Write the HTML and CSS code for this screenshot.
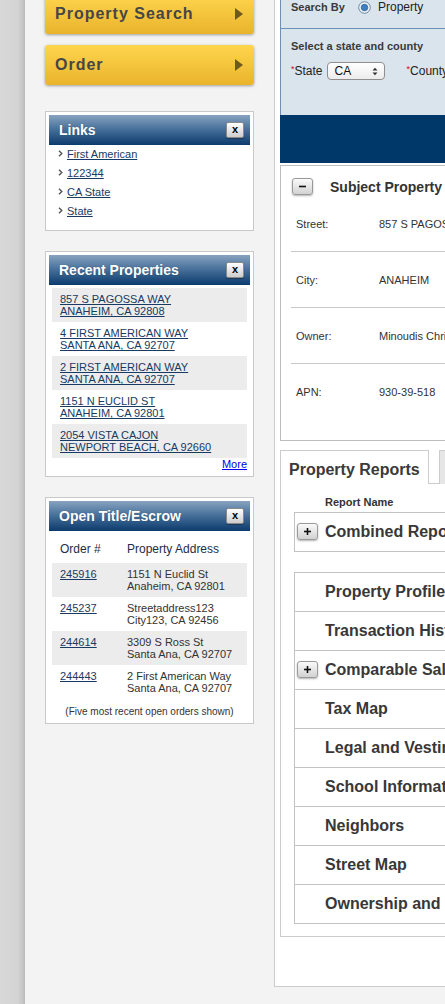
FILE: index.html
```html
<!DOCTYPE html>
<html>
<head>
<meta charset="utf-8">
<link rel="stylesheet" href="styles.css">
</head>
<body>
<div class="layout">
  <div class="strip"></div>
  <aside class="sidebar">
    <div class="nav-btn">Property Search<span class="tri"></span></div>
    <div class="nav-btn">Order<span class="tri"></span></div>

    <section class="panel first">
      <div class="panel-head"><span>Links</span><span class="close">x</span></div>
      <ul class="links">
        <li><svg class="chev" width="5" height="7" viewBox="0 0 5 7"><path d="M1 0.8 L3.8 3.5 L1 6.2" fill="none" stroke="#555" stroke-width="1.4"/></svg><a href="#">First American</a></li>
        <li><svg class="chev" width="5" height="7" viewBox="0 0 5 7"><path d="M1 0.8 L3.8 3.5 L1 6.2" fill="none" stroke="#555" stroke-width="1.4"/></svg><a href="#">122344</a></li>
        <li><svg class="chev" width="5" height="7" viewBox="0 0 5 7"><path d="M1 0.8 L3.8 3.5 L1 6.2" fill="none" stroke="#555" stroke-width="1.4"/></svg><a href="#">CA State</a></li>
        <li><svg class="chev" width="5" height="7" viewBox="0 0 5 7"><path d="M1 0.8 L3.8 3.5 L1 6.2" fill="none" stroke="#555" stroke-width="1.4"/></svg><a href="#">State</a></li>
      </ul>
    </section>

    <section class="panel">
      <div class="panel-head"><span>Recent Properties</span><span class="close">x</span></div>
      <ul class="recent">
        <li><a href="#">857 S PAGOSSA WAY<br>ANAHEIM, CA 92808</a></li>
        <li><a href="#">4 FIRST AMERICAN WAY<br>SANTA ANA, CA 92707</a></li>
        <li><a href="#">2 FIRST AMERICAN WAY<br>SANTA ANA, CA 92707</a></li>
        <li><a href="#">1151 N EUCLID ST<br>ANAHEIM, CA 92801</a></li>
        <li><a href="#">2054 VISTA CAJON<br>NEWPORT BEACH, CA 92660</a></li>
      </ul>
      <div class="more"><a href="#">More</a></div>
    </section>

    <section class="panel">
      <div class="panel-head"><span>Open Title/Escrow</span><span class="close">x</span></div>
      <div class="orders">
        <div class="order-row order-head"><span class="oc">Order #</span><span>Property Address</span></div>
        <div class="order-row"><span class="oc"><a href="#">245916</a></span><span>1151 N Euclid St<br>Anaheim, CA 92801</span></div>
        <div class="order-row"><span class="oc"><a href="#">245237</a></span><span>Streetaddress123<br>City123, CA 92456</span></div>
        <div class="order-row"><span class="oc"><a href="#">244614</a></span><span>3309 S Ross St<br>Santa Ana, CA 92707</span></div>
        <div class="order-row"><span class="oc"><a href="#">244443</a></span><span>2 First American Way<br>Santa Ana, CA 92707</span></div>
      </div>
      <div class="note">(Five most recent open orders shown)</div>
    </section>
  </aside>

  <main class="main">
    <div class="search-form">
      <div class="search-by">
        <span class="sb-label">Search By</span>
        <svg class="radio" width="13" height="13" viewBox="0 0 13 13"><circle cx="6.5" cy="6.5" r="5.8" fill="#e9eff5" stroke="#6f88a3" stroke-width="1"/><circle cx="6.5" cy="6.5" r="3.2" fill="#3f80c2" stroke="#2a5f97" stroke-width="0.8"/></svg>
        <span class="sb-opt">Property</span>
      </div>
      <div class="search-body">
        <div class="sel-title">Select a state and county</div>
        <div class="fields">
          <span class="field-label"><span class="req">*</span>State</span>
          <span class="select">CA<svg width="6" height="9" viewBox="0 0 6 9"><path d="M0.5 3.5 L3 0.8 L5.5 3.5Z M0.5 5.5 L3 8.2 L5.5 5.5Z" fill="#333"/></svg></span>
          <span class="field-label county"><span class="req">*</span>County</span>
        </div>
      </div>
    </div>
    <div class="search-bar"></div>

    <section class="subject">
      <div class="subject-head">
        <span class="tbtn"><svg width="9" height="9" viewBox="0 0 9 9"><rect x="1" y="3.7" width="7" height="1.6" fill="#111"/></svg></span>
        <span class="subject-title">Subject Property</span>
      </div>
      <div class="srow"><span class="slabel">Street:</span><span>857 S PAGOSSA WAY</span></div>
      <div class="srow"><span class="slabel">City:</span><span>ANAHEIM</span></div>
      <div class="srow"><span class="slabel">Owner:</span><span>Minoudis Christopher</span></div>
      <div class="srow"><span class="slabel">APN:</span><span>930-39-518</span></div>
    </section>

    <section class="reports">
      <div class="tabs">
        <div class="tab active">Property Reports</div>
        <div class="tab">Property Orders</div>
      </div>
      <div class="rep-head">Report Name</div>
      <div class="combined">
        <span class="tbtn"><svg width="9" height="9" viewBox="0 0 9 9"><rect x="1" y="3.7" width="7" height="1.6" fill="#111"/><rect x="3.7" y="1" width="1.6" height="7" fill="#111"/></svg></span>
        <span class="rep-name">Combined Report</span>
      </div>
      <div class="rep-list">
        <div class="rep-row"><span class="slot"></span><span class="rep-name">Property Profile</span></div>
        <div class="rep-row"><span class="slot"></span><span class="rep-name">Transaction History</span></div>
        <div class="rep-row"><span class="slot"><span class="tbtn"><svg width="9" height="9" viewBox="0 0 9 9"><rect x="1" y="3.7" width="7" height="1.6" fill="#111"/><rect x="3.7" y="1" width="1.6" height="7" fill="#111"/></svg></span></span><span class="rep-name">Comparable Sales</span></div>
        <div class="rep-row"><span class="slot"></span><span class="rep-name">Tax Map</span></div>
        <div class="rep-row"><span class="slot"></span><span class="rep-name">Legal and Vesting</span></div>
        <div class="rep-row"><span class="slot"></span><span class="rep-name">School Information</span></div>
        <div class="rep-row"><span class="slot"></span><span class="rep-name">Neighbors</span></div>
        <div class="rep-row"><span class="slot"></span><span class="rep-name">Street Map</span></div>
        <div class="rep-row"><span class="slot"></span><span class="rep-name">Ownership and <span class="hl">Encumbrance</span></span></div>
      </div>
    </section>
  </main>
</div>
</body>
</html>
```
FILE: styles.css
```css
* { box-sizing: border-box; }
html { overflow: hidden; }
body {
  margin: 0;
  background: #f3f3f3;
  font-family: "Liberation Sans", Arial, sans-serif;
  color: #333;
}
ul { list-style: none; margin: 0; padding: 0; }

.layout {
  display: flex;
  align-items: flex-start;
  margin-top: -6px;
  min-height: 1010px;
}
.strip {
  flex: none;
  width: 25px;
  align-self: stretch;
  background: linear-gradient(to right, #d8d8d8 0, #d4d4d4 70%, #c6c6c6 90%, #b9b9b9 100%);
}

/* sidebar */
.sidebar { flex: none; width: 209px; margin-left: 20px; }
.nav-btn {
  display: flex;
  align-items: center;
  justify-content: space-between;
  height: 40px;
  padding: 0 11px 0 10px;
  border-radius: 3px;
  background: linear-gradient(#ffd54e, #e9b42c);
  box-shadow: 0 1px 3px rgba(0,0,0,.35);
  font-size: 16px;
  font-weight: bold;
  letter-spacing: 1px;
  color: #464646;
}
.nav-btn + .nav-btn { margin-top: 11px; }
.tri {
  width: 0; height: 0;
  border-left: 8px solid #6f5a1e;
  border-top: 6px solid transparent;
  border-bottom: 6px solid transparent;
}

.panel {
  margin-top: 20px;
  background: #fff;
  border: 1px solid #c9c9c9;
  padding: 3px;
}
.panel.first { margin-top: 26px; }
.panel-head {
  height: 30px;
  display: flex;
  align-items: center;
  justify-content: space-between;
  padding: 0 6px 0 10px;
  background: linear-gradient(#88a3c0 0, #4a729c 45%, #0b3b6d 100%);
  color: #fff;
  font-size: 14px;
  font-weight: bold;
  text-shadow: 0 0 1px rgba(0,0,0,.3);
}
.close {
  width: 18px; height: 16px;
  display: flex; align-items: center; justify-content: center;
  border: 1px solid #8a8a8a;
  border-radius: 2px;
  background: linear-gradient(#ffffff, #cdcdcd);
  box-shadow: 0 1px 1px rgba(0,0,0,.3);
  color: #000;
  font-size: 11px;
  line-height: 1;
  text-shadow: none;
  padding-bottom: 1px;
}

.links { padding: 0 0 7px 9px; margin-top: -1px; }
.links li {
  display: flex;
  align-items: center;
  height: 19px;
  font-size: 11px;
}
.chev { margin-right: 4px; }
.links a, .recent a, .oc a { color: #183a63; }

.recent { padding: 3px 3px 0; }
.recent li {
  height: 34px;
  padding: 5px 8px 0;
  font-size: 11px;
  line-height: 12px;
}
.recent li:nth-child(odd) { background: #ececec; }
.more {
  text-align: right;
  padding: 0 3px 2px;
  font-size: 11px;
  line-height: 13px;
}
.more a { color: #0000ee; }

.orders { padding: 0 3px; }
.order-row {
  display: flex;
  height: 34px;
  padding-top: 5px;
  font-size: 11px;
  line-height: 12px;
  color: #333;
}
.order-row:nth-child(even) { background: #ececec; }
.order-head {
  height: 32px;
  padding-top: 4px;
  align-items: center;
  font-size: 12px;
  color: #1f2d45;
}
.oc { width: 75px; padding-left: 8px; flex: none; }
.note {
  text-align: center;
  font-size: 10px;
  line-height: 13px;
  padding: 6px 0 2px;
  color: #333;
}

/* main */
.main {
  flex: none;
  width: 760px;
  margin-left: 20px;
  margin-top: -6px;
  background: #fff;
  border: 1px solid #ccc;
  padding: 5px 5px 5px;
}
.search-form {
  background: #d9e4ed;
  border: 1px solid #6d91b5;
  border-bottom: none;
}
.search-by {
  height: 34px;
  border-bottom: 1px solid #6d91b5;
  display: flex;
  align-items: flex-start;
  padding: 6px 0 0 10px;
  line-height: 13px;
}
.sb-label { width: 67px; font-size: 11px; font-weight: bold; color: #3a3a3a; }
.sb-opt { margin-left: 7px; font-size: 12px; color: #222; }
.search-body { height: 86px; padding: 11px 0 0 10px; }
.sel-title { font-size: 11px; font-weight: bold; line-height: 13px; color: #3a3a3a; }
.fields {
  display: flex;
  align-items: center;
  margin-top: 9px;
  height: 18px;
  font-size: 12px;
  color: #222;
}
.req { color: #d0021b; font-size: 9px; vertical-align: 3px; }
.select {
  display: flex;
  align-items: center;
  justify-content: space-between;
  width: 58px;
  height: 18px;
  margin-left: 4px;
  padding: 0 6px 0 7px;
  border: 1px solid #8e8e8e;
  border-radius: 4px;
  background: linear-gradient(#ffffff, #ececec);
  font-size: 12px;
  color: #111;
}
.county { margin-left: 22px; }
.search-bar { height: 48px; background: #00386a; }

.subject {
  margin-top: 2px;
  border: 1px solid #bdbdbd;
  padding-bottom: 20px;
}
.subject-head {
  display: flex;
  align-items: center;
  height: 30px;
  padding: 11px 0 0 11px;
}
.tbtn {
  flex: none;
  width: 21px; height: 17px;
  display: flex; align-items: center; justify-content: center;
  border: 1px solid #9a9a9a;
  border-radius: 3px;
  background: linear-gradient(#fafafa, #d2d2d2);
  box-shadow: 0 1px 2px rgba(0,0,0,.3);
}
.subject-title {
  margin-left: 17px;
  font-size: 14px;
  font-weight: bold;
  color: #333;
}
.srow {
  display: flex;
  align-items: center;
  height: 56px;
  margin-left: 10px;
  padding-left: 5px;
  border-bottom: 1px solid #c8c8c8;
  font-size: 11px;
  color: #333;
  white-space: nowrap;
}
.srow:last-child { border-bottom: none; }
.slabel { width: 83px; flex: none; }

.reports {
  margin-top: 9px;
  margin-bottom: 44px;
  border: 1px solid #ccc;
  border-top: none;
  padding: 0 0 12px 13px;
}
.tabs {
  display: flex;
  height: 34px;
  margin-left: -14px;
  border-bottom: 1px solid #ccc;
}
.tab {
  height: 34px;
  margin-bottom: -1px;
  padding: 10px 8px 0;
  border: 1px solid #ccc;
  border-bottom: none;
  background: #e6e6e6;
  font-size: 16px;
  line-height: 18px;
  font-weight: bold;
  color: #3a3a3a;
  white-space: nowrap;
}
.tab.active { width: 149px; background: #fff; margin-right: 10px; }
.rep-head {
  margin-top: 12px;
  padding-left: 31px;
  font-size: 11px;
  line-height: 13px;
  font-weight: bold;
  color: #333;
}
.combined {
  display: flex;
  align-items: center;
  height: 40px;
  margin-top: 3px;
  padding-left: 2px;
  padding-bottom: 1px;
  border: 1px solid #c3c3c3;
}
.rep-name {
  margin-left: 7px;
  font-size: 16px;
  font-weight: bold;
  color: #383838;
  white-space: nowrap;
}
.rep-list {
  margin-top: 20px;
  border: 1px solid #c3c3c3;
}
.rep-row {
  display: flex;
  align-items: center;
  height: 39px;
  padding-left: 2px;
  padding-bottom: 1px;
  border-bottom: 1px solid #c3c3c3;
}
.rep-row:last-child { height: 38px; border-bottom: none; }
.slot { width: 21px; flex: none; }
.hl { background: #f6e6a3; }
```
